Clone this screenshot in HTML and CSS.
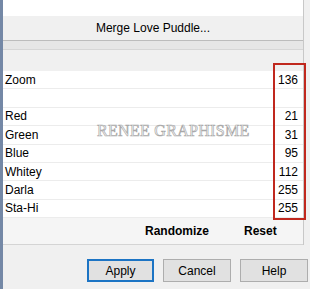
FILE: index.html
```html
<!DOCTYPE html>
<html lang="en">
<head>
    <meta charset="UTF-8">
    <title>Merge Love Puddle</title>
    <link rel="stylesheet" href="styles.css">
</head>
<body>
    <div class="dialog">
        <div class="panel">
            <div class="preview"></div>
            <div class="title">Merge Love Puddle...</div>
            <div class="progress"></div>
            <div class="spacer"></div>

            <ul class="params">
                <li><span>Zoom</span><span>136</span></li>
                <li><span></span><span></span></li>
                <li><span>Red</span><span>21</span></li>
                <li><span>Green</span><span>31</span></li>
                <li><span>Blue</span><span>95</span></li>
                <li><span>Whitey</span><span>112</span></li>
                <li><span>Darla</span><span>255</span></li>
                <li><span>Sta-Hi</span><span>255</span></li>
            </ul>

            <div class="tools">
                <span class="randomize">Randomize</span>
                <span class="reset">Reset</span>
            </div>
        </div>

        <div class="buttons">
            <button class="btn default">Apply</button>
            <button class="btn">Cancel</button>
            <button class="btn">Help</button>
        </div>

        <!-- things drawn over the dialog -->
        <div class="watermark">RENEE GRAPHISME</div>
        <div class="highlight"></div>
    </div>
</body>
</html>
```

FILE: styles.css
```css
body {
    margin: 0;
    background: #f0f0f0;
    font-family: 'Liberation Sans', Arial, sans-serif;
    font-size: 12px;
    color: #000000;
}
.dialog {
    position: relative;
    width: 310px;
    height: 289px;
    overflow: hidden;
    border-left: 3px solid #7488a6;
    box-sizing: border-box;
}
.panel {
    width: 300px;
    border-right: 1px solid #c8c8c8;
    background: #f0f0f0;
}
.preview {
    height: 16px;
    background: #ffffff;
}
.title {
    height: 24px;
    line-height: 24px;
    text-align: center;
}
.progress {
    height: 8px;
    background: #e6e6e6;
    border-top: 1px solid #bcbcbc;
    border-bottom: 1px solid #d6d6d6;
}
.spacer {
    height: 21px;
}
.params {
    list-style-type: none;
    margin: 0;
    padding: 0;
}
.params li {
    display: flex;
    justify-content: space-between;
    align-items: center;
    height: 17.4px;
    padding: 0 5px 0 2px;
    background: #ffffff;
    border-bottom: 1px solid #ececec;
}
.tools {
    display: flex;
    align-items: center;
    height: 26px;
    background: #f5f5f5;
    border-bottom: 1px solid #d4d4d4;
    font-weight: bold;
    font-size: 12px;
}
.randomize {
    margin-left: 142px;
}
.reset {
    margin-left: 35px;
}
.buttons {
    display: flex;
    gap: 9px;
    padding: 14px 0 0 84px;
}
.btn {
    height: 23px;
    width: 68px;
    flex-shrink: 0;
    background: #e1e1e1;
    border: 1px solid #adadad;
    font-family: 'Liberation Sans', Arial, sans-serif;
    font-size: 12px;
    padding: 0;
    color: #000000;
}
.btn.default {
    width: 67px;
    border: 2px solid #1c74c4;
}
.watermark {
    position: absolute;
    left: 94px;
    top: 122px;
    font-family: 'Liberation Serif', 'Times New Roman', serif;
    font-size: 16px;
    letter-spacing: 0.3px;
    color: #ffffff;
    -webkit-text-stroke: 0.7px #a8a8a8;
}
.highlight {
    position: absolute;
    left: 270px;
    top: 63px;
    width: 29px;
    height: 153px;
    border: 2px solid #c0281e;
}
```
